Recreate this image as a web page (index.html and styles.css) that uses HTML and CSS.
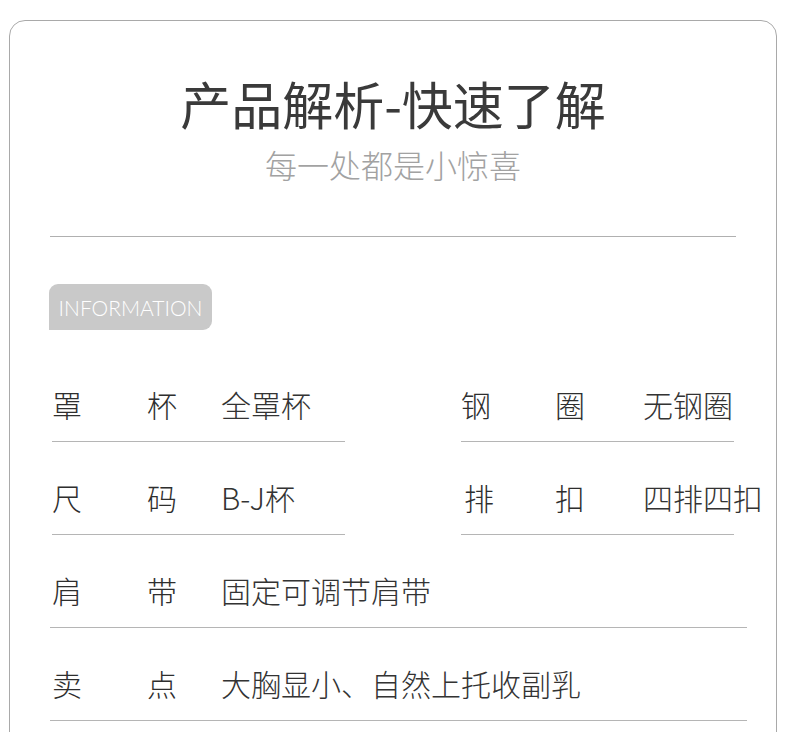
FILE: index.html
```html
<!DOCTYPE html>
<html lang="zh-CN">
<head>
<meta charset="utf-8">
<title>产品解析</title>
<link rel="stylesheet" href="styles.css">
</head>
<body>
<div class="card">
  <h1 class="title">产品解析-快速了解</h1>
  <p class="subtitle">每一处都是小惊喜</p>
  <hr class="divider">
  <div class="badge">INFORMATION</div>
  <div class="grid">
    <div class="cell cell-left"><span class="k1">罩</span><span class="k2">杯</span><span class="v">全罩杯</span></div>
    <div class="cell cell-right"><span class="k1">钢</span><span class="k2">圈</span><span class="v">无钢圈</span></div>
    <div class="cell cell-left"><span class="k1">尺</span><span class="k2">码</span><span class="v">B-J杯</span></div>
    <div class="cell cell-right"><span class="k1 nudge">排</span><span class="k2 nudge">扣</span><span class="v">四排四扣</span></div>
  </div>
  <div class="cell cell-wide"><span class="k1">肩</span><span class="k2">带</span><span class="v">固定可调节肩带</span></div>
  <div class="cell cell-wide"><span class="k1">卖</span><span class="k2">点</span><span class="v">大胸显小、自然上托收副乳</span></div>
</div>
</body>
</html>
```
FILE: styles.css
```css
html, body {
  margin: 0;
  padding: 0;
  background: #ffffff;
}
body {
  width: 790px;
  height: 732px;
  overflow: hidden;
  font-family: "Noto Sans CJK SC", "Noto Sans", sans-serif;
  color: #333333;
}
.card {
  margin: 20px 0 0 9px;
  width: 768px;
  height: 760px;
  border: 1px solid #a9a9a9;
  border-radius: 16px;
  box-sizing: border-box;
  padding-top: 55px;
}
.title {
  margin: 0;
  text-align: center;
  font-size: 51px;
  line-height: 54px;
  font-weight: 400;
  color: #3a3a3a;
}
.subtitle {
  margin: 16px 0 0;
  text-align: center;
  font-size: 32px;
  line-height: 36px;
  font-weight: 300;
  color: #a2a2a2;
}
.divider {
  margin: 54px 40px 0 40px;
  border: 0;
  border-top: 1px solid #b0b0b0;
  height: 0;
}
.badge {
  margin: 47px 0 0 39px;
  width: 163px;
  height: 46px;
  background: #c9c9c9;
  border-radius: 9px 9px 9px 0;
  color: #ffffff;
  font-family: "Lato", "Open Sans", sans-serif;
  font-weight: 300;
  font-size: 21px;
  line-height: 47px;
  text-align: center;
}
.grid {
  display: grid;
  grid-template-columns: 293px 273px;
  column-gap: 116px;
  margin: 19px 0 0 42px;
}
.cell {
  display: flex;
  align-items: center;
  height: 93px;
  padding-top: 40px;
  padding-bottom: 22px;
  box-sizing: border-box;
  border-bottom: 1px solid #b5b5b5;
  font-size: 30px;
  line-height: 30px;
  font-weight: 300;
  color: #2e2e2e;
}
.cell .k1 { width: 95px; flex: none; }
.cell .k2 { width: 74px; flex: none; }
.cell-right .k1 { width: 94px; }
.cell-right .k2 { width: 88px; }
.cell-right .k1.nudge { padding-left: 3px; width: 91px; }
.cell .v { white-space: nowrap; color: #333333; }
.cell-wide {
  margin-left: 40px;
  width: 697px;
  padding-left: 2px;
}
```
